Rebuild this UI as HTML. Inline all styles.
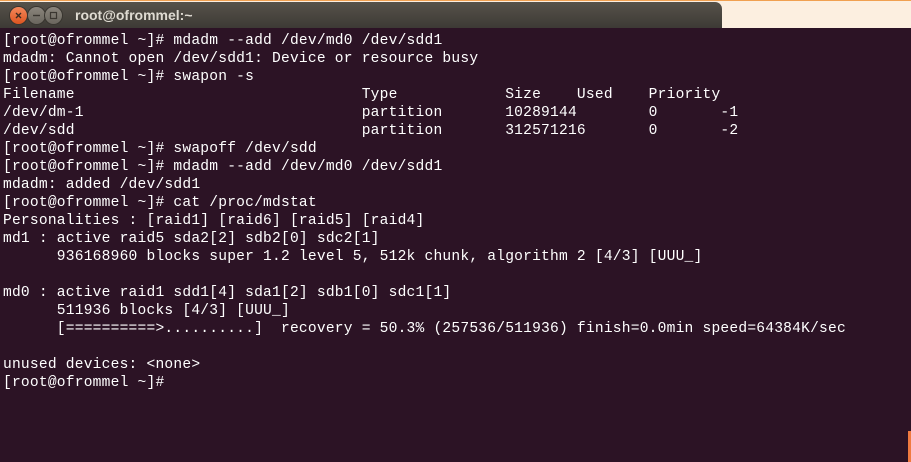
<!DOCTYPE html>
<html><head><style>
html,body{margin:0;padding:0;width:911px;height:462px;overflow:hidden;background:#fcefe0;position:relative}
.top{position:absolute;left:0;top:0;width:911px;height:1px;background:#f0a050}
.tb{position:absolute;left:0;top:2px;width:722px;height:26px;background:linear-gradient(#56524a,#3d3a35);border-top-right-radius:7px}
.btn{position:absolute;top:5px;width:17px;height:17px;border-radius:50%;background:linear-gradient(#8a857c,#6a665e);box-shadow:0 0 0 1px #38352f}
.btn.x{background:linear-gradient(#f3875a,#dd5520)}
.title{position:absolute;left:75px;top:5px;font:bold 14px "Liberation Sans",sans-serif;color:#dfdbd2}
.term{position:absolute;left:0;top:28px;width:911px;height:434px;background:#2c1325}
pre{margin:0;position:absolute;left:3px;top:4px;font:14.6px/18px "Liberation Mono",monospace;letter-spacing:0.21px;color:#ffffff}
.edge{position:absolute;left:908px;top:431px;width:3px;height:31px;background:#f07a40}
</style></head><body>
<div class="top"></div>
<div class="tb">
<div class="btn x" style="left:10px"><svg width="17" height="17"><path d="M6 6L11 11M11 6L6 11" stroke="#3a2a20" stroke-width="1.4"/></svg></div>
<div class="btn" style="left:28px"><svg width="17" height="17"><path d="M5 8.5H12" stroke="#3a3630" stroke-width="1.4"/></svg></div>
<div class="btn" style="left:45px"><svg width="17" height="17"><rect x="5.5" y="5.5" width="6" height="6" fill="none" stroke="#3a3630" stroke-width="1.2"/></svg></div>
<div class="title">root@ofrommel:~</div>
</div>
<div class="term"><pre>[root@ofrommel ~]# mdadm --add /dev/md0 /dev/sdd1
mdadm: Cannot open /dev/sdd1: Device or resource busy
[root@ofrommel ~]# swapon -s
Filename                                Type            Size    Used    Priority
/dev/dm-1                               partition       10289144        0       -1
/dev/sdd                                partition       312571216       0       -2
[root@ofrommel ~]# swapoff /dev/sdd
[root@ofrommel ~]# mdadm --add /dev/md0 /dev/sdd1
mdadm: added /dev/sdd1
[root@ofrommel ~]# cat /proc/mdstat
Personalities : [raid1] [raid6] [raid5] [raid4]
md1 : active raid5 sda2[2] sdb2[0] sdc2[1]
      936168960 blocks super 1.2 level 5, 512k chunk, algorithm 2 [4/3] [UUU_]

md0 : active raid1 sdd1[4] sda1[2] sdb1[0] sdc1[1]
      511936 blocks [4/3] [UUU_]
      [==========&gt;..........]  recovery = 50.3% (257536/511936) finish=0.0min speed=64384K/sec

unused devices: &lt;none&gt;
[root@ofrommel ~]# </pre></div>
<div class="edge"></div>
</body></html>
